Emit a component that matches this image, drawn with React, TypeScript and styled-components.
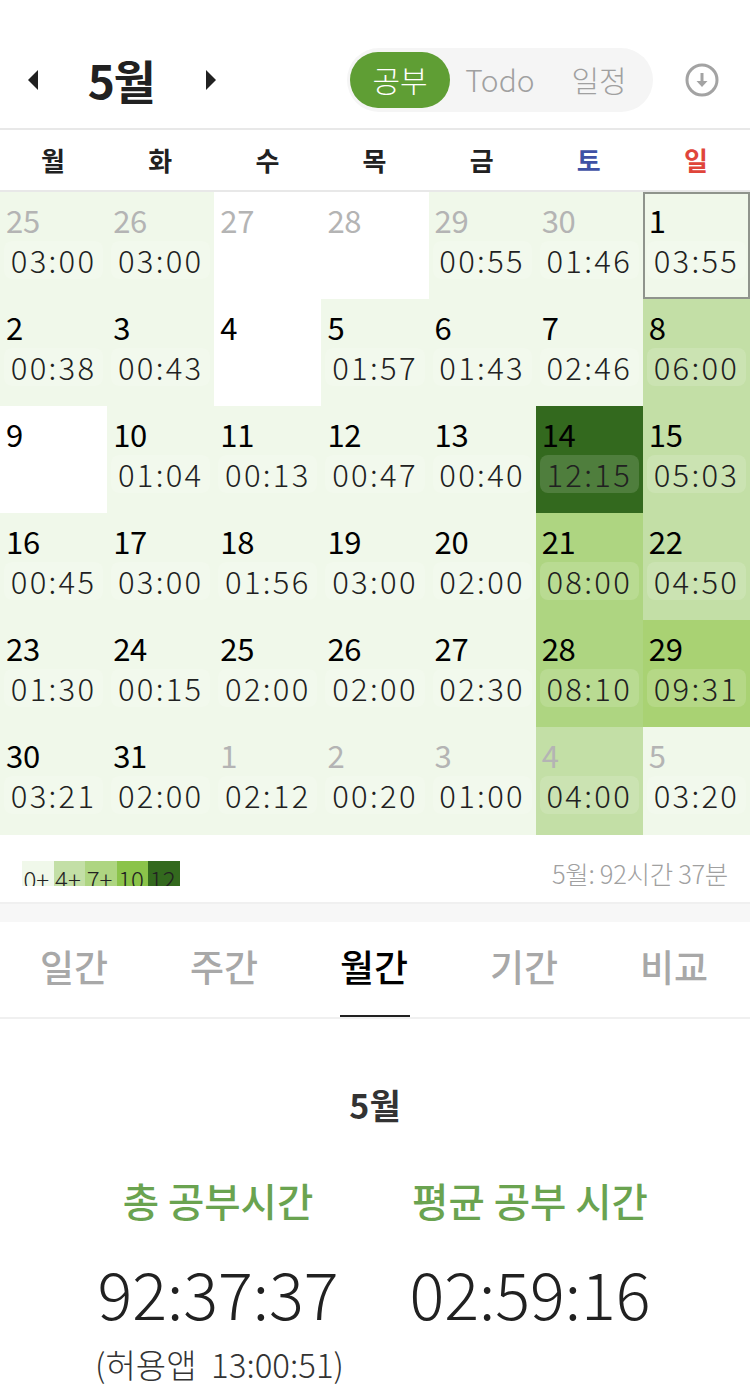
import React from 'react'
import styled, { createGlobalStyle } from 'styled-components'

const GlobalStyle = createGlobalStyle`
  html, body { margin: 0; padding: 0; background: #fff; }
  body { font-family: "Noto Sans CJK KR", "Noto Sans", sans-serif; color: #212121; }
  * { box-sizing: border-box; }
`

const Page = styled.div`
  width: 750px;
  height: 1389px;
  overflow: hidden;
`
const Header = styled.header`
  height: 130px;
  padding: 48px 28px 0 28px;
  display: flex;
  align-items: flex-start;
  border-bottom: 2px solid #e8e8e8;
`
const MonthNav = styled.div`
  width: 188px;
  height: 64px;
  display: flex;
  align-items: center;
  justify-content: space-between;
`
const Arrow = styled.div<{ $dir: 'left' | 'right' }>`
  width: 0;
  height: 0;
  border-top: 10px solid transparent;
  border-bottom: 10px solid transparent;
  ${(p) => (p.$dir === 'left' ? 'border-right: 10px solid #212121;' : 'border-left: 10px solid #212121;')}
`
const MonthTitle = styled.div`
  font-size: 46px;
  font-weight: 700;
  line-height: 64px;
  letter-spacing: -1.5px;
  margin-right: 2px;
  margin-top: -2px;
`
const Segment = styled.div`
  margin-left: 131px;
  width: 306px;
  height: 64px;
  padding: 4px 3px;
  border-radius: 32px;
  background: #f5f5f5;
  display: flex;
  align-items: stretch;
`
const SegmentItem = styled.div<{ $active?: boolean; $width: number }>`
  width: ${(p) => p.$width}px;
  border-radius: 28px;
  display: flex;
  align-items: center;
  justify-content: center;
  font-size: 30px;
  font-weight: 300;
  padding-bottom: 2px;
  color: ${(p) => (p.$active ? '#fff' : '#a0a0a0')};
  background: ${(p) => (p.$active ? '#5f9e34' : 'transparent')};
`
const DownloadButton = styled.div`
  margin-left: 32px;
  margin-top: 15px;
  width: 34px;
  height: 34px;
  color: #a3a3a3;
`
const WeekRow = styled.div`
  height: 62px;
  display: grid;
  grid-template-columns: repeat(7, 1fr);
  border-bottom: 2px solid #e8e8e8;
`
const WeekDay = styled.div<{ $color?: string }>`
  display: flex;
  align-items: center;
  justify-content: center;
  font-size: 26px;
  font-weight: 700;
  padding: 0 1px 2px 0;
  color: ${(p) => p.$color ?? '#212121'};
`
const Calendar = styled.div`
  display: grid;
  grid-template-columns: repeat(7, 1fr);
  grid-auto-rows: 107.1px;
`
const Cell = styled.div<{ $bg: string; $today?: boolean }>`
  background: ${(p) => p.$bg};
  padding: 7px 4px 0;
  position: relative;
  ${(p) => (p.$today ? 'outline: 2px solid #8f948c; outline-offset: -2px;' : '')}
`
const DayNum = styled.div<{ $muted?: boolean }>`
  font-size: 31px;
  line-height: 42px;
  height: 42px;
  padding-left: 2px;
  letter-spacing: -0.3px;
  color: ${(p) => (p.$muted ? '#b4b4b4' : '#000')};
`
const TimePill = styled.div`
  height: 38px;
  border-radius: 8px;
  background: rgba(255, 255, 255, 0.14);
  display: flex;
  align-items: center;
  justify-content: center;
  font-size: 31px;
  line-height: 36px;
  font-weight: 300;
  letter-spacing: 2.3px;
  color: #212121;
`
const LegendRow = styled.div`
  height: 69px;
  padding: 26px 22px 0;
  display: flex;
  justify-content: space-between;
  align-items: flex-start;
  border-bottom: 2px solid #f0f0f0;
`
const Legend = styled.div`
  display: flex;
  height: 25px;
  overflow: hidden;
`
const LegendItem = styled.div<{ $bg: string }>`
  width: 31.6px;
  height: 25px;
  padding-right: 3px;
  background: ${(p) => p.$bg};
  font-size: 24px;
  font-weight: 300;
  line-height: 35px;
  text-align: center;
  color: #222;
  white-space: nowrap;
`
const MonthTotal = styled.div`
  font-size: 25.5px;
  font-weight: 300;
  line-height: 24px;
  letter-spacing: -0.3px;
  color: #a0a0a0;
`
const Band = styled.div`
  height: 18px;
  background: #f7f7f7;
`
const Tabs = styled.nav`
  height: 97px;
  display: grid;
  grid-template-columns: repeat(5, 1fr);
  border-bottom: 2px solid #f0f0f0;
`
const Tab = styled.div<{ $active?: boolean }>`
  position: relative;
  display: flex;
  align-items: center;
  justify-content: center;
  padding: 0 2px 6px 0;
  font-size: 37px;
  font-weight: 500;
  color: ${(p) => (p.$active ? '#000' : '#a8a8a8')};
  ${(p) =>
    p.$active
      ? `&:after {
    content: '';
    position: absolute;
    left: 40px;
    right: 40px;
    bottom: 0;
    height: 2px;
    background: #212121;
  }`
      : ''}
`
const Summary = styled.section`
  padding-top: 62px;
`
const SummaryMonth = styled.div`
  text-align: center;
  font-size: 34px;
  line-height: 48px;
  font-weight: 700;
  color: #333;
`
const Stats = styled.div`
  margin-top: 44px;
  padding-left: 76px;
  display: grid;
  grid-template-columns: 284px 284px;
  column-gap: 28px;
`
const Stat = styled.div`
  text-align: center;
  white-space: nowrap;
`
const StatLabel = styled.div`
  font-size: 39.5px;
  line-height: 54px;
  font-weight: 500;
  color: #6aa350;
`
const StatValue = styled.div`
  margin-top: 23px;
  font-size: 65px;
  font-weight: 300;
  line-height: 84px;
  color: #212121;
`
const StatNote = styled.div`
  font-size: 33px;
  font-weight: 300;
  line-height: 46px;
  margin-top: 7px;
  padding-left: 3px;
  color: #333;
  white-space: pre;
`

const L0 = '#f0f8ea'
const L1 = '#c3dfa6'
const L2 = '#aed581'
const L3 = '#a9d273'
const L4 = '#33691e'
const W = '#ffffff'

type Day = { n: number; t?: string; muted?: boolean; bg: string; today?: boolean }

const days: Day[] = [
  { n: 25, t: '03:00', muted: true, bg: L0 },
  { n: 26, t: '03:00', muted: true, bg: L0 },
  { n: 27, muted: true, bg: W },
  { n: 28, muted: true, bg: W },
  { n: 29, t: '00:55', muted: true, bg: L0 },
  { n: 30, t: '01:46', muted: true, bg: L0 },
  { n: 1, t: '03:55', bg: L0, today: true },
  { n: 2, t: '00:38', bg: L0 },
  { n: 3, t: '00:43', bg: L0 },
  { n: 4, bg: W },
  { n: 5, t: '01:57', bg: L0 },
  { n: 6, t: '01:43', bg: L0 },
  { n: 7, t: '02:46', bg: L0 },
  { n: 8, t: '06:00', bg: L1 },
  { n: 9, bg: W },
  { n: 10, t: '01:04', bg: L0 },
  { n: 11, t: '00:13', bg: L0 },
  { n: 12, t: '00:47', bg: L0 },
  { n: 13, t: '00:40', bg: L0 },
  { n: 14, t: '12:15', bg: L4 },
  { n: 15, t: '05:03', bg: L1 },
  { n: 16, t: '00:45', bg: L0 },
  { n: 17, t: '03:00', bg: L0 },
  { n: 18, t: '01:56', bg: L0 },
  { n: 19, t: '03:00', bg: L0 },
  { n: 20, t: '02:00', bg: L0 },
  { n: 21, t: '08:00', bg: L2 },
  { n: 22, t: '04:50', bg: L1 },
  { n: 23, t: '01:30', bg: L0 },
  { n: 24, t: '00:15', bg: L0 },
  { n: 25, t: '02:00', bg: L0 },
  { n: 26, t: '02:00', bg: L0 },
  { n: 27, t: '02:30', bg: L0 },
  { n: 28, t: '08:10', bg: L2 },
  { n: 29, t: '09:31', bg: L3 },
  { n: 30, t: '03:21', bg: L0 },
  { n: 31, t: '02:00', bg: L0 },
  { n: 1, t: '02:12', muted: true, bg: L0 },
  { n: 2, t: '00:20', muted: true, bg: L0 },
  { n: 3, t: '01:00', muted: true, bg: L0 },
  { n: 4, t: '04:00', muted: true, bg: L1 },
  { n: 5, t: '03:20', muted: true, bg: L0 },
]

const weekDays = ['월', '화', '수', '목', '금', '토', '일']
const weekColors: Record<string, string> = { 토: '#3f51a5', 일: '#e0453a' }
const legend = [
  { label: '0+', bg: L0 },
  { label: '4+', bg: L1 },
  { label: '7+', bg: L2 },
  { label: '10', bg: '#8bc34a' },
  { label: '12', bg: L4 },
]
const tabs = ['일간', '주간', '월간', '기간', '비교']

export default function App() {
  return (
    <Page>
      <GlobalStyle />
      <Header>
        <MonthNav>
          <Arrow $dir='left' />
          <MonthTitle>5월</MonthTitle>
          <Arrow $dir='right' />
        </MonthNav>
        <Segment>
          <SegmentItem $active $width={100}>공부</SegmentItem>
          <SegmentItem $width={100}>Todo</SegmentItem>
          <SegmentItem $width={98}>일정</SegmentItem>
        </Segment>
        <DownloadButton>
          <svg width='34' height='34' viewBox='0 0 34 34' fill='none'>
            <circle cx='17' cy='17' r='15' stroke='currentColor' strokeWidth='3' />
            <path d='M17 10v11' stroke='currentColor' strokeWidth='3' />
            <path d='M11.5 18h11L17 24z' fill='currentColor' />
          </svg>
        </DownloadButton>
      </Header>
      <WeekRow>
        {weekDays.map((d) => (
          <WeekDay key={d} $color={weekColors[d]}>{d}</WeekDay>
        ))}
      </WeekRow>
      <Calendar>
        {days.map((d, i) => (
          <Cell key={i} $bg={d.bg} $today={d.today}>
            <DayNum $muted={d.muted}>{d.n}</DayNum>
            {d.t && <TimePill>{d.t}</TimePill>}
          </Cell>
        ))}
      </Calendar>
      <LegendRow>
        <Legend>
          {legend.map((l) => (
            <LegendItem key={l.label} $bg={l.bg}>{l.label}</LegendItem>
          ))}
        </Legend>
        <MonthTotal>5월: 92시간 37분</MonthTotal>
      </LegendRow>
      <Band />
      <Tabs>
        {tabs.map((t) => (
          <Tab key={t} $active={t === '월간'}>{t}</Tab>
        ))}
      </Tabs>
      <Summary>
        <SummaryMonth>5월</SummaryMonth>
        <Stats>
          <Stat>
            <StatLabel>총 공부시간</StatLabel>
            <StatValue>92:37:37</StatValue>
            <StatNote>(허용앱  13:00:51)</StatNote>
          </Stat>
          <Stat>
            <StatLabel>평균 공부 시간</StatLabel>
            <StatValue>02:59:16</StatValue>
          </Stat>
        </Stats>
      </Summary>
    </Page>
  )
}
